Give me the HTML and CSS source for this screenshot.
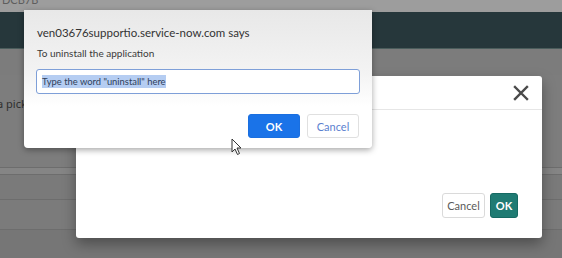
FILE: index.html
```html
<!DOCTYPE html>
<html>
<head>
<meta charset="utf-8">
<link rel="stylesheet" href="styles.css">
</head>
<body>
<div class="page">
  <div class="topbar"><span class="topbar-text">DCB7B</span></div>
  <div class="header"></div>
  <div class="subbar"></div>
  <div class="row row-first"><span class="row-text">a picker</span></div>
  <div class="row row-band"></div>
  <div class="row row-mid"></div>
  <div class="row row-low"></div>
  <div class="row row-end"></div>

  <div class="modal">
    <div class="modal-head">
      <svg class="close-icon" width="16" height="16" viewBox="0 0 16 16">
        <path d="M2 2 L14 14 M14 2 L2 14" stroke="#4a4a4a" stroke-width="2.4" stroke-linecap="square" fill="none"/>
      </svg>
    </div>
    <div class="modal-body"></div>
    <div class="modal-foot">
      <button class="m-btn m-cancel">Cancel</button>
      <button class="m-btn m-ok">OK</button>
    </div>
  </div>

  <div class="alert">
    <div class="alert-title">ven03676supportio.service-now.com says</div>
    <div class="alert-msg">To uninstall the application</div>
    <div class="alert-input"><span class="sel">Type the word "uninstall" here</span></div>
    <div class="alert-actions">
      <button class="a-btn a-ok">OK</button>
      <button class="a-btn a-cancel">Cancel</button>
    </div>
  </div>

  <svg class="cursor" width="12" height="18" viewBox="0 0 12 18">
    <path d="M1 1 L1 14 L4 11 L6.5 16.5 L8.5 15.5 L6 10 L10 10 Z" fill="#fff" stroke="#333" stroke-width="1" stroke-linejoin="round"/>
  </svg>
</div>
</body>
</html>
```
FILE: styles.css
```css
html, body {
  margin: 0;
  padding: 0;
}
body {
  width: 562px;
  height: 258px;
  overflow: hidden;
  background: #777777;
  font-family: "Lato", "Noto Sans", sans-serif;
}
.page {
  position: relative;
  width: 562px;
  height: 258px;
  display: flex;
  flex-direction: column;
  background: #787878;
}
.topbar {
  height: 12px;
  background: #9d9d9d;
  overflow: hidden;
  flex: none;
}
.topbar-text {
  display: block;
  font-size: 11px;
  line-height: 11px;
  margin-top: -6px;
  margin-left: 2px;
  color: #5e5e5e;
}
.header {
  height: 36px;
  background: #26373b;
  border-bottom: 1px solid #4b5d5c;
  flex: none;
}
.subbar {
  height: 26px;
  background: #7c7c7c;
  flex: none;
}
.row {
  flex: none;
  border-bottom: 1px solid #6d6d6d;
}
.row-first {
  height: 92px;
  background: #7d7d7d;
  display: flex;
  align-items: flex-start;
}
.row-text {
  margin-top: 21px;
  margin-left: -3px;
  font-family: "Noto Sans", sans-serif;
  font-size: 11px;
  color: #2e2e2e;
}
.row-band {
  height: 6px;
  background: #858585;
}
.row-mid {
  height: 24px;
  background: #7a7a7a;
}
.row-low {
  height: 29px;
  background: #7b7b7b;
}
.row-end {
  flex: 1;
  border-bottom: none;
  background: #767676;
}

/* background modal */
.modal {
  position: absolute;
  left: 76px;
  top: 76px;
  width: 466px;
  height: 162px;
  background: #ffffff;
  border-radius: 3px;
  box-shadow: 0 6px 14px rgba(0,0,0,0.35);
  display: flex;
  flex-direction: column;
}
.modal-head {
  height: 33px;
  border-bottom: 1px solid #e6e6e6;
  display: flex;
  justify-content: flex-end;
  align-items: center;
  padding-right: 13px;
  flex: none;
}
.close-icon {
  display: block;
}
.modal-body {
  flex: 1;
}
.modal-foot {
  display: flex;
  justify-content: flex-end;
  gap: 5px;
  padding: 0 24px 20px 0;
}
.m-btn {
  height: 25px;
  font-family: "Lato", sans-serif;
  font-size: 11px;
  border-radius: 3px;
  padding: 0;
}
.m-cancel {
  width: 43px;
  background: #ffffff;
  border: 1px solid #dadada;
  color: #5a5a5a;
}
.m-ok {
  width: 28px;
  background: #1f7b73;
  border: 1px solid #166a63;
  color: #ffffff;
  font-weight: bold;
}

/* browser alert */
.alert {
  position: absolute;
  left: 24px;
  top: 10px;
  width: 348px;
  height: 138px;
  box-sizing: border-box;
  padding: 15px 12px 0 12px;
  background: linear-gradient(#e8e8e8 0%, #f3f3f3 45%, #ffffff 70%);
  border-radius: 0 0 4px 4px;
  box-shadow: 0 2px 6px rgba(0,0,0,0.35);
  display: flex;
  flex-direction: column;
}
.alert-title {
  font-size: 11.5px;
  line-height: 16px;
  color: #333333;
  margin-left: 1px;
}
.alert-msg {
  font-size: 10px;
  line-height: 14px;
  color: #3a3a3a;
  margin-top: 5px;
  margin-left: 1px;
}
.alert-input {
  margin-top: 9px;
  height: 25px;
  box-sizing: border-box;
  border: 1px solid #7e9fd8;
  border-radius: 3px;
  background: #ffffff;
  display: flex;
  align-items: center;
  padding-left: 5px;
}
.sel {
  font-size: 9.4px;
  line-height: 13px;
  background: #b5cdf2;
  color: #2f3f5a;
}
.alert-actions {
  display: flex;
  justify-content: flex-end;
  gap: 7px;
  margin-top: 20px;
  padding-right: 1px;
}
.a-btn {
  width: 52px;
  height: 24px;
  border-radius: 3px;
  font-family: "Lato", sans-serif;
  font-size: 11px;
  padding: 0;
}
.a-ok {
  background: #1a73e8;
  border: 1px solid #1a6fe0;
  color: #ffffff;
  font-weight: bold;
}
.a-cancel {
  background: #ffffff;
  border: 1px solid #e0e0e0;
  color: #5b7fcf;
}

.cursor {
  position: absolute;
  left: 231px;
  top: 138px;
}
```
